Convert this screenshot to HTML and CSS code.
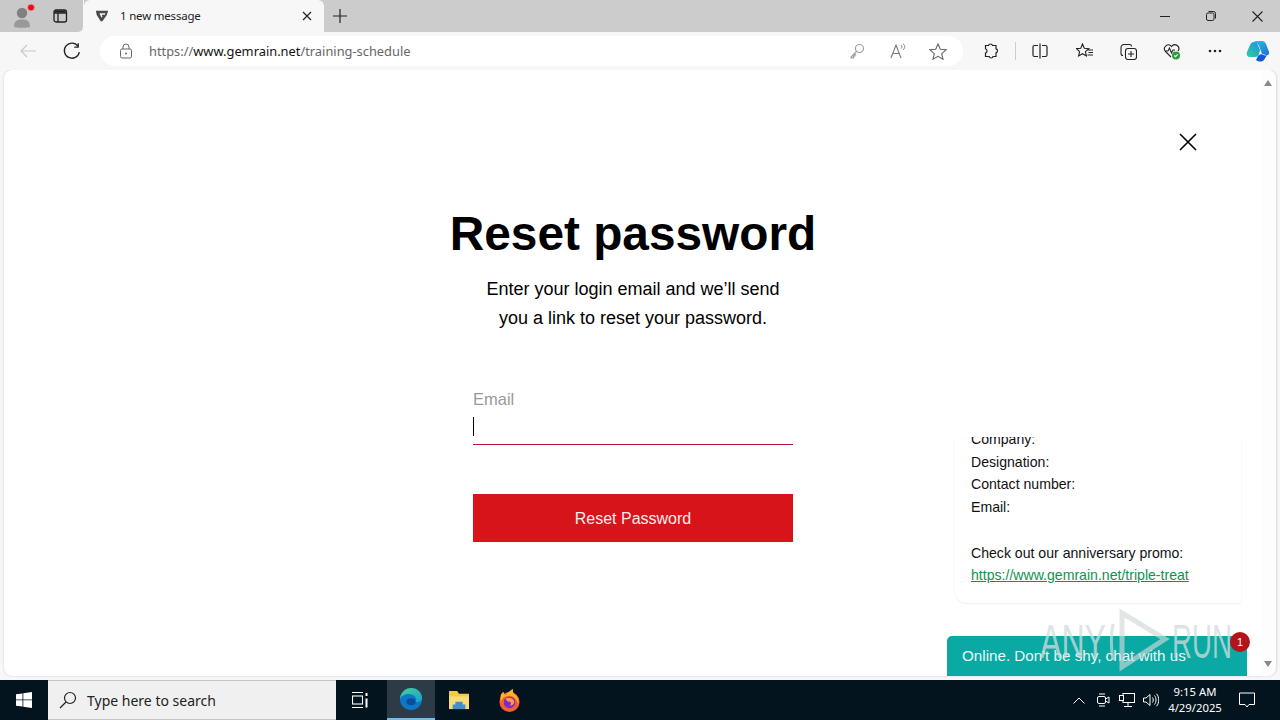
FILE: index.html
```html
<!DOCTYPE html>
<html lang="en">
<head>
    <meta charset="UTF-8">
    <meta name="viewport" content="width=device-width, initial-scale=1.0">
    <title>1 new message</title>
    <link rel="stylesheet" href="styles.css">
</head>
<body>
    <!-- tab strip -->
    <div class="tabstrip">
        <div class="tab_left">
            <div class="profile">
                <svg width="24" height="24" viewBox="0 0 24 24"><circle cx="10" cy="9" r="5.200" fill="#808080"/><path d="M2 23c0-6 3-7.500 8-7.500s8 1.500 8 7.500c-3 1-13 1-16 0z" fill="#999"/><circle cx="19" cy="3.500" r="3.500" fill="#e3101c" stroke="#e8a0a0" stroke-width="1"/></svg>
            </div>
            <div class="tab_btn">
                <svg width="16" height="16" viewBox="0 0 16 16" fill="none" stroke="#222" stroke-width="1.300"><rect x="2" y="2" width="12.500" height="12" rx="2"/><path d="M2 5h12.500M6 5v9" /><path d="M2.500 3.500h11" stroke-width="2"/></svg>
            </div>
        </div>
        <div class="tab">
            <svg class="favicon" width="14" height="14" viewBox="0 0 16 16"><path d="M1 3h14l-1.500 5L8.500 15h-2L2 8z" fill="#4a4a4a"/><path d="M5 6h7l-.7 1.600H7.800L8.400 10 7.500 11z" fill="#f7f7f7"/></svg>
            <span class="tab_title">1 new message</span>
            <svg class="tab_close" width="10" height="10" viewBox="0 0 10 10" stroke="#222" stroke-width="1.200"><path d="M1 1l8 8M9 1l-8 8"/></svg>
        </div>
        <svg class="new_tab" width="14" height="14" viewBox="0 0 14 14" stroke="#222" stroke-width="1.200"><path d="M7 0v14M0 7h14"/></svg>
        <div class="win_btns">
            <svg width="10" height="10" viewBox="0 0 10 10" stroke="#222"><path d="M0 5.500h10"/></svg>
            <svg width="10" height="10" viewBox="0 0 10 10" fill="none" stroke="#222"><rect x=".5" y="2" width="7.500" height="7.500" rx="1.500"/><path d="M2.500 .5h5a2 2 0 0 1 2 2v5"/></svg>
            <svg width="11" height="11" viewBox="0 0 11 11" stroke="#222" stroke-width="1.100"><path d="M.5 .5l10 10M10.500 .5l-10 10"/></svg>
        </div>
    </div>

    <!-- toolbar -->
    <div class="toolbar">
        <svg class="back" width="16" height="14" viewBox="0 0 16 14" fill="none" stroke="#c8c8c8" stroke-width="1.200"><path d="M16 7H1M7 1L1 7l6 6"/></svg>
        <svg class="reload" width="18" height="18" viewBox="0 0 16 16" fill="none" stroke="#222" stroke-width="1.200"><path d="M13.500 1v3.500H10"/><path d="M14.500 9a6.700 6.700 0 1 1-1.200-5.300"/></svg>
        <div class="address">
            <svg class="lock" width="14" height="16" viewBox="0 0 14 16" fill="none" stroke="#666"><rect x="1.500" y="6" width="11" height="9" rx="1.500"/><path d="M4 6V4a3 3 0 0 1 6 0v2"/><circle cx="7" cy="10.500" r="1" fill="#666" stroke="none"/></svg>
            <span class="url">https://<b>www.gemrain.net</b>/training-schedule</span>
            <div class="addr_icons">
                <svg width="16" height="16" viewBox="0 0 16 16" fill="none" stroke="#999" stroke-width="1.100"><circle cx="10.500" cy="5.500" r="4"/><path d="M7.500 8.500L2 14v1h2.500v-2H6v-1.500h1"/></svg>
                <svg width="18" height="16" viewBox="-2 0 18 16" fill="none" stroke="#777" stroke-width="1.100"><path d="M1 15L6 2l5 13M3 10.500h6"/><path d="M11 2c1.300.8 1.300 2.600 0 3.500M13 .8c2.300 1.500 2.300 4.400 0 6" stroke-width=".9"/></svg>
                <svg width="18" height="17" viewBox="0 0 18 17" fill="none" stroke="#666" stroke-width="1.100"><path d="M9 1l2.300 5.200 5.700.6-4.300 3.800 1.300 5.600L9 13.300l-5 2.900 1.300-5.600L1 6.800l5.700-.6z"/></svg>
            </div>
        </div>
        <div class="tools">
            <svg width="16" height="16" viewBox="0 0 16 16" fill="none" stroke="#222" stroke-width="1.200"><path d="M5.500 2.500C6 .5 9 .5 9.500 2.500H13v3.300c2 .4 2 3.500 0 4V13.500H10c-.4 2-3.400 2-3.800 0H2.500V10c2-.6 2-3.600 0-4.200V2.500z"/></svg>
            <i class="sep"></i>
            <svg width="16" height="16" viewBox="0 0 16 16" fill="none" stroke="#222" stroke-width="1.200"><path d="M6 2.500H2.500a1.500 1.500 0 0 0-1.500 1.500v8a1.500 1.500 0 0 0 1.500 1.500H6M10 2.500h3.500A1.500 1.500 0 0 1 15 4v8a1.500 1.500 0 0 1-1.500 1.500H10M8 .5v15"/></svg>
            <svg class="fav" width="18" height="16" viewBox="0 0 18 16" fill="none" stroke="#222" stroke-width="1.100"><path d="M6.500 1l1.800 4.200 4.500.4-3.400 3 1 4.400-3.900-2.300L2.600 13l1-4.400L.5 5.600l4.300-.4zM12 7h5M12.500 9.500H17M11.500 12H17"/></svg>
            <svg width="17" height="17" viewBox="0 0 17 17" fill="none" stroke="#222" stroke-width="1.100"><rect x="5.500" y="5.500" width="11" height="11" rx="2.500"/><path d="M11 8v6M8 11h6M3 12.500a2 2 0 0 1-2-2V4.500a3 3 0 0 1 3-3h5.500a2 2 0 0 1 2 2"/></svg>
            <svg width="18" height="17" viewBox="0 0 18 17" fill="none" stroke="#222" stroke-width="1.100"><path d="M8 14L2.500 8.500C-1 4.500 5 -1 8.500 3.500 12-1 18 4 15 8"/><path d="M2 8h3l1.500-3 2 5L10 7h2"/><circle cx="13" cy="12.500" r="4" fill="#2c9b3f" stroke="none"/><path d="M11.300 12.500l1.200 1.200 2.200-2.400" stroke="#fff"/></svg>
            <svg class="dots" width="14" height="4" viewBox="0 0 14 4" fill="#222"><circle cx="2" cy="2" r="1.300"/><circle cx="7" cy="2" r="1.300"/><circle cx="12" cy="2" r="1.300"/></svg>
            <svg class="copilot" width="24" height="24" viewBox="0 0 24 24"><defs><linearGradient id="cpa" x1="0" y1="0" x2="1" y2="1"><stop offset="0" stop-color="#2fc5d8"/><stop offset="1" stop-color="#1a6ee0"/></linearGradient><linearGradient id="cpb" x1="0" y1="1" x2="1" y2="0"><stop offset="0" stop-color="#2ecf9a"/><stop offset="1" stop-color="#1f8fe8"/></linearGradient></defs><path d="M8 2h8c2 0 3 1 4 3l3 8c.5 2-1 4-3 3l-4-1-3-8C12 5 10 3 8 2z" fill="url(#cpa)"/><path d="M8 3c-2 0-3 1-4 3l-3 7c-1 3 1 5 3 5h5c2 0 4-1 4-3l1-4-3-7c0-1-2-1-3-1z" fill="url(#cpb)"/><path d="M10 21c3 2 6 2 8 0l3-5c-2 1-4 0-6-1l-3 2z" fill="#1558d6"/></svg>
        </div>
    </div>

    <!-- page -->
    <div class="viewport">
        <div class="page">
            <svg class="modal_close" width="18" height="18" viewBox="0 0 18 18" stroke="#000" stroke-width="1.600"><path d="M1 1l16 16M17 1L1 17"/></svg>
            <div class="reset">
                <h1>Reset password</h1>
                <p class="lead">Enter your login email and we’ll send<br>you a link to reset your password.</p>
                <label class="email_label">Email</label>
                <div class="email_field"><i class="caret"></i></div>
                <button class="reset_btn">Reset Password</button>
            </div>
            <div class="chat_card">
                <div>Company:</div>
                <div>Designation:</div>
                <div>Contact number:</div>
                <div>Email:</div>
                <div>&nbsp;</div>
                <div>Check out our anniversary promo:</div>
                <a href="#">https://www.gemrain.net/triple-treat</a>
            </div>
            <div class="chat_bar">Online. Don't be shy, chat with us</div>
            <span class="badge">1</span>
        </div>
        <div class="scrollbar">
            <i class="arrow_up"></i>
            <i class="arrow_down"></i>
        </div>
        <svg class="watermark" width="200" height="64" viewBox="0 0 200 64" fill="none" stroke="#cfd9d9" stroke-width="3"><text x="0" y="50" textLength="66" lengthAdjust="spacingAndGlyphs" font-family="Liberation Sans" font-size="49" fill="#d2dcdc" fill-opacity=".75" stroke="none">ANY</text><path d="M73 16c-2 10-2 24 0 36" stroke-opacity=".7"/><path d="M82 5v54l43-28z" stroke-opacity=".65" stroke-width="5"/><text x="132" y="50" textLength="60" lengthAdjust="spacingAndGlyphs" font-family="Liberation Sans" font-size="49" fill="#d2dcdc" fill-opacity=".75" stroke="none">RUN</text></svg>
    </div>

    <!-- taskbar -->
    <div class="taskbar">
        <div class="start">
            <svg width="16" height="16" viewBox="0 0 16 16" fill="#fff"><path d="M0 2.300l6.500-.9V7.500H0zM7.300 1.300L16 0v7.500H7.300zM0 8.300h6.500v6.300L0 13.700zM7.300 8.300H16V16l-8.700-1.200z"/></svg>
        </div>
        <div class="search">
            <svg width="18" height="18" viewBox="0 0 18 18" fill="none" stroke="#222" stroke-width="1.200"><circle cx="11" cy="7" r="5.500"/><path d="M7 11l-6 6"/></svg>
            <span>Type here to search</span>
        </div>
        <div class="task_item">
            <svg width="16" height="16" viewBox="0 0 16 16" fill="none" stroke="#fff" stroke-width="1.100"><path d="M0 .5h11M0 15.500h11"/><rect x=".5" y="4" width="10" height="8"/><path d="M14.500 1v3M14.500 6.500v9" stroke-width="2"/></svg>
        </div>
        <div class="task_item active">
            <svg width="24" height="24" viewBox="0 0 26 26"><defs><linearGradient id="edg" x1="0" y1="0" x2="1" y2="1"><stop offset="0" stop-color="#46d48b"/><stop offset="1" stop-color="#1a9fd8"/></linearGradient></defs><circle cx="13" cy="13" r="12" fill="#0f76c8"/><path d="M1 13C2 4 9 1 13 1c7 0 12 5 12 11 0 4-4 5-7 4 1-1 1-3 0-5-2-4-13-6-17 2z" fill="url(#edg)"/><ellipse cx="13" cy="16" rx="5" ry="3.800" fill="#0a4f96"/></svg>
        </div>
        <div class="task_item">
            <svg width="22" height="20" viewBox="0 0 24 22"><path d="M1 1h9l2 3h11v17H1z" fill="#f2c94c"/><path d="M1 7h22v14H1z" fill="#f9dc78"/><path d="M8 13h8v3h3v5H5v-5h3z" fill="#3e90d0"/></svg>
        </div>
        <div class="task_item firefox">
            <svg width="23" height="23" viewBox="0 0 24 24"><circle cx="12" cy="13.500" r="10.500" fill="#f5602a"/><path d="M3 6c1-2 2-3 3-3 0 2 1 3 2 3 2-2 5-5 8-6-1 3 0 4 2 6 3 3 4 6 3 10-1-6-5-9-9-9-5 0-9 3-9 8 0-4-1-6 0-9z" fill="#ffb02e"/><circle cx="12" cy="14" r="6" fill="#7a2bd0"/><path d="M8 10c3-2 8-1 9 3 0 3-3 5-5 4 2-1 2-3 0-4-1 1-3 0-4-3z" fill="#ff9a3a"/></svg>
        </div>
        <div class="tray">
            <svg width="12" height="7" viewBox="0 0 12 7" fill="none" stroke="#fff"><path d="M.5 6.500L6 1l5.500 5.500"/></svg>
            <svg width="14" height="16" viewBox="0 0 14 16" fill="none" stroke="#fff"><rect x="1.500" y="4.500" width="8" height="7" rx="1.500"/><path d="M9.500 7l3.500-2v6l-3.500-2M3 2h6M3 14h6"/></svg>
            <svg width="16" height="14" viewBox="0 0 16 14" fill="none" stroke="#fff"><rect x="4" y=".5" width="11.500" height="9"/><rect x=".5" y="2.500" width="4" height="5" fill="#03141f"/><path d="M9 10v3M5 13.500h8"/></svg>
            <svg width="16" height="14" viewBox="0 0 16 14" fill="none" stroke="#fff"><path d="M.5 5v4h2.500l4 3.500v-11L3 5z"/><path d="M9.500 4.500c1 1.500 1 3.500 0 5M11.500 2.500c2 2.500 2 6.500 0 9M13.500 .8c3 3.500 3 9 0 12.400"/></svg>
        </div>
        <div class="clock">9:15 AM<br>4/29/2025</div>
        <svg class="notify" width="16" height="16" viewBox="0 0 16 16" fill="none" stroke="#fff"><path d="M.5 1h15v11.500H10L8 15l-2-2.500H.5z"/></svg>
    </div>
</body>
</html>
```

FILE: styles.css
```css
* {
    box-sizing: border-box;
}
html, body {
    margin: 0;
    height: 100%;
    overflow: hidden;
}
body {
    display: flex;
    flex-direction: column;
    width: 1280px;
    height: 720px;
    background: #f7f7f7;
    font-family: "Liberation Sans", Arial, sans-serif;
}

/* tab strip */
.tabstrip {
    display: flex;
    align-items: center;
    height: 32px;
    background: linear-gradient(90deg, #f7f7f7 84px, #cccccc 84px);
}
.tab_left {
    display: flex;
    align-items: center;
    width: 83px;
    height: 32px;
    margin-right: 1px;
    background: #c9c9c9;
    border-radius: 0 0 5px 0;
}
.profile {
    display: flex;
    width: 44px;
    padding-left: 12px;
}
.tab_btn {
    display: flex;
    padding-left: 8px;
}
.tab {
    display: flex;
    align-items: center;
    width: 240px;
    height: 32px;
    padding: 0 12px 2px 11px;
    background: #f7f7f7;
    border-radius: 6px 6px 0 0;
}
.tab_title {
    flex: 1;
    margin-left: 11px;
    font-family: "Noto Sans", sans-serif;
    font-size: 11.500px;
    letter-spacing: -.2px;
    color: #222;
}
.tab_close {
    margin-top: 2px;
}
.new_tab {
    margin-left: 9px;
}
.win_btns {
    display: flex;
    align-items: center;
    gap: 36px;
    margin-left: auto;
    padding-right: 17px;
}

/* toolbar */
.toolbar {
    display: flex;
    align-items: center;
    height: 38px;
    padding: 0 10px 0 20px;
    background: #f7f7f7;
}
.toolbar > * {
    flex-shrink: 0;
}
.reload {
    margin-left: 27px;
}
.address {
    display: flex;
    align-items: center;
    width: 863px;
    height: 30px;
    margin-left: 19px;
    padding: 0 16px 0 19px;
    background: #fff;
    border-radius: 15px;
}
.url {
    margin-left: 16px;
    font-family: "Noto Sans", sans-serif;
    font-size: 12.850px;
    color: #666;
}
.url b {
    font-weight: 400;
    color: #111;
}
.addr_icons {
    display: flex;
    align-items: center;
    gap: 23px;
    margin-left: auto;
}
.tools {
    display: flex;
    align-items: center;
    gap: 26px;
    margin-left: 20px;
}
.sep {
    width: 1px;
    height: 18px;
    margin: 0 -10px;
    background: #ccc;
}
.fav {
    margin-left: 2px;
}
.dots {
    margin-left: 1px;
}
.copilot {
    margin-left: -2px;
}

/* page */
.viewport {
    position: relative;
    display: flex;
    align-items: flex-start;
    flex: 1;
    padding: 0 4px;
    overflow: hidden;
}
.page {
    position: relative;
    flex: 1;
    height: 606px;
    background: #fff;
    border-radius: 8px 0 0 8px;
    box-shadow: 0 0 2px rgba(0, 0, 0, .2);
    overflow: hidden;
}
.scrollbar {
    position: relative;
    width: 14px;
    height: 606px;
    background: #fdfdfd;
    border-radius: 0 8px 8px 0;
    box-shadow: 1px 0 2px rgba(0, 0, 0, .12);
}
.arrow_up, .arrow_down {
    position: absolute;
    left: 2px;
    width: 0;
    height: 0;
    border-left: 4px solid transparent;
    border-right: 4px solid transparent;
}
.arrow_up {
    top: 10px;
    border-bottom: 6px solid #888;
}
.arrow_down {
    top: 591px;
    border-top: 6px solid #888;
}
.modal_close {
    position: absolute;
    top: 63px;
    left: 1175px;
}
.reset {
    display: flex;
    flex-direction: column;
    align-items: center;
    padding-top: 135px;
}
.reset h1 {
    margin: 0;
    font-size: 47.800px;
    line-height: 58px;
    font-weight: 700;
    color: #000;
}
.lead {
    margin: 12px 0 0;
    font-size: 18px;
    line-height: 29px;
    text-align: center;
    color: #000;
}
.email_label {
    width: 320px;
    margin-top: 54px;
    font-size: 16.500px;
    line-height: 24px;
    color: #999;
}
.email_field {
    width: 320px;
    height: 34px;
    padding-top: 6px;
    border-bottom: 1px solid #b5142a;
}
.caret {
    display: block;
    width: 1px;
    height: 19px;
    background: #000;
}
.reset_btn {
    width: 320px;
    height: 48px;
    margin-top: 49px;
    padding-top: 2px;
    border: 0;
    background: #d7141a;
    color: #fdeeee;
    font-family: "Liberation Sans", Arial, sans-serif;
    font-size: 16px;
}

/* chat widget */
.chat_card {
    position: absolute;
    left: 951px;
    top: 367px;
    width: 286px;
    height: 166px;
    display: flex;
    flex-direction: column;
    justify-content: flex-end;
    padding: 0 16px 16px;
    overflow: hidden;
    background: #fff;
    border-radius: 0 0 0 12px;
    box-shadow: 0 1px 2px rgba(0, 0, 0, .08);
    font-size: 14.100px;
    line-height: 22.700px;
    color: #111;
}
.chat_card a {
    color: #12924f;
}
.chat_bar {
    position: absolute;
    left: 943px;
    top: 566px;
    width: 300px;
    height: 40px;
    padding-left: 15px;
    background: #0aa9a4;
    border-radius: 5px 5px 0 0;
    color: #e9f8f7;
    font-size: 15.200px;
    line-height: 40px;
}
.badge {
    position: absolute;
    left: 1226px;
    top: 562px;
    width: 20px;
    height: 20px;
    background: #b5121b;
    border-radius: 50%;
    color: #fff;
    font-size: 11px;
    line-height: 20px;
    text-align: center;
}
.watermark {
    position: absolute;
    left: 1040px;
    top: 538px;
}

/* taskbar */
.taskbar {
    display: flex;
    align-items: center;
    height: 40px;
    background: #03141f;
    color: #fff;
}
.start {
    display: flex;
    justify-content: center;
    width: 48px;
}
.search {
    display: flex;
    align-items: center;
    gap: 10px;
    width: 288px;
    height: 40px;
    padding-left: 11px;
    background: #f0f0f0;
    border: 1px solid #c4c4c4;
    border-width: 1px 0;
    color: #222;
    font-family: "Noto Sans", sans-serif;
    font-size: 14px;
}
.task_item {
    display: flex;
    align-items: center;
    justify-content: center;
    width: 48px;
    height: 40px;
}
.task_item.active {
    margin-left: 3px;
    background: #2c3b45;
    border-bottom: 2px solid #76b9ed;
}
.task_item.firefox {
    margin-left: 2px;
}
.tray {
    display: grid;
    grid-template-columns: repeat(4, 24px);
    align-items: center;
    justify-items: center;
    margin-left: auto;
}
.clock {
    width: 64px;
    font-family: "Noto Sans", sans-serif;
    font-size: 11.300px;
    line-height: 16px;
    text-align: center;
}
.notify {
    margin: 0 25px 0 12px;
}
```
